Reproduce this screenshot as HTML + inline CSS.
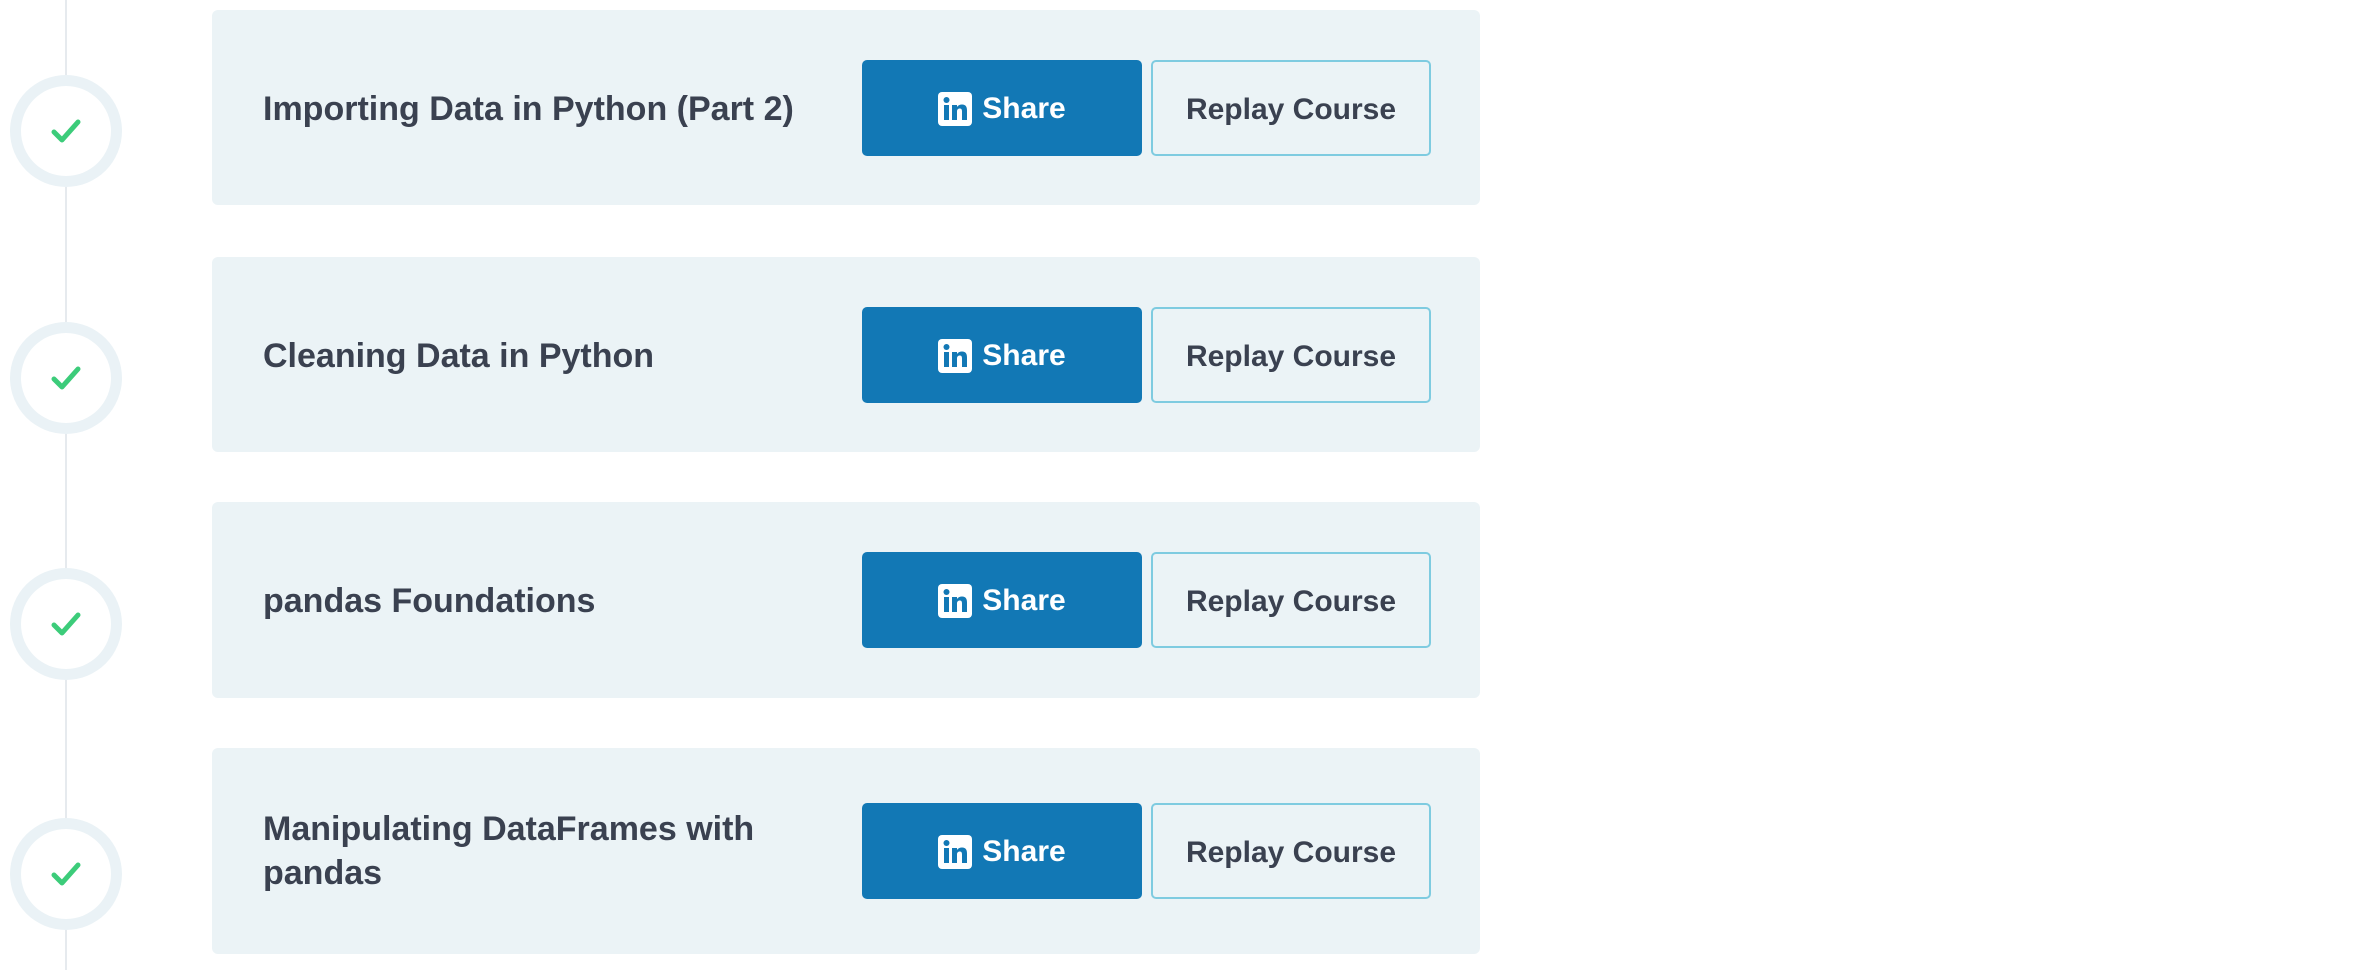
<!DOCTYPE html>
<html><head><style>
html,body{margin:0;padding:0;background:#fff;width:2368px;height:970px;overflow:hidden;font-family:"Liberation Sans",sans-serif;}
.line{position:absolute;left:65px;top:0;width:2px;height:970px;background:#e6eaee;}
.circ{position:absolute;left:10px;width:112px;height:112px;border-radius:50%;background:#eaf2f6;}
.circ .in{position:absolute;left:11px;top:11px;width:90px;height:90px;border-radius:50%;background:#fff;}
.circ svg{position:absolute;left:41px;top:44px;}
.card{position:absolute;left:212px;width:1268px;background:#ebf3f6;border-radius:6px;}
.title{position:absolute;left:51px;font-weight:bold;font-size:34px;color:#3a4150;line-height:44px;width:540px;}
.share{position:absolute;left:650px;width:280px;height:96px;background:#1278b5;border-radius:5px;color:#fff;font-weight:bold;font-size:30px;display:flex;align-items:center;justify-content:center;padding-top:2px;box-sizing:border-box;}
.replay{position:absolute;left:939px;width:276px;height:92px;border:2px solid #7ecbe0;border-radius:5px;color:#3a4150;font-weight:bold;font-size:30px;display:flex;align-items:center;justify-content:center;box-sizing:content-box;padding-top:0;}
.replay span{position:relative;top:2px;}
</style></head><body>
<div class="line"></div>
<div class="circ" style="top:75px"><div class="in"></div><svg width="30" height="26" viewBox="0 0 30 26"><path d="M3 13 L11 21 L27 3" fill="none" stroke="#3ccc7a" stroke-width="5" stroke-linecap="round" stroke-linejoin="round"/></svg></div>
<div class="circ" style="top:322px"><div class="in"></div><svg width="30" height="26" viewBox="0 0 30 26"><path d="M3 13 L11 21 L27 3" fill="none" stroke="#3ccc7a" stroke-width="5" stroke-linecap="round" stroke-linejoin="round"/></svg></div>
<div class="circ" style="top:568px"><div class="in"></div><svg width="30" height="26" viewBox="0 0 30 26"><path d="M3 13 L11 21 L27 3" fill="none" stroke="#3ccc7a" stroke-width="5" stroke-linecap="round" stroke-linejoin="round"/></svg></div>
<div class="circ" style="top:818px"><div class="in"></div><svg width="30" height="26" viewBox="0 0 30 26"><path d="M3 13 L11 21 L27 3" fill="none" stroke="#3ccc7a" stroke-width="5" stroke-linecap="round" stroke-linejoin="round"/></svg></div>

<div class="card" style="top:10px;height:195px">
<div class="title" style="top:77px">Importing Data in Python (Part 2)</div>
<div class="share" style="top:50px"><svg width="34" height="34" viewBox="0 0 34 34" style="margin-right:10px"><rect width="34" height="34" rx="4" fill="#fff"/><rect x="6" y="13" width="5" height="15" fill="#1278b5"/><circle cx="8.5" cy="8" r="3" fill="#1278b5"/><path d="M14 13h5v2c1-1.6 3-2.5 5-2.5 4 0 5 2.5 5 6V28h-5v-8.5c0-2-.6-3-2.3-3S19 17.7 19 19.5V28h-5z" fill="#1278b5"/></svg>Share</div>
<div class="replay" style="top:50px"><span>Replay Course</span></div>
</div>
<div class="card" style="top:257px;height:195px">
<div class="title" style="top:77px">Cleaning Data in Python</div>
<div class="share" style="top:50px"><svg width="34" height="34" viewBox="0 0 34 34" style="margin-right:10px"><rect width="34" height="34" rx="4" fill="#fff"/><rect x="6" y="13" width="5" height="15" fill="#1278b5"/><circle cx="8.5" cy="8" r="3" fill="#1278b5"/><path d="M14 13h5v2c1-1.6 3-2.5 5-2.5 4 0 5 2.5 5 6V28h-5v-8.5c0-2-.6-3-2.3-3S19 17.7 19 19.5V28h-5z" fill="#1278b5"/></svg>Share</div>
<div class="replay" style="top:50px"><span>Replay Course</span></div>
</div>
<div class="card" style="top:502px;height:196px">
<div class="title" style="top:77px">pandas Foundations</div>
<div class="share" style="top:50px"><svg width="34" height="34" viewBox="0 0 34 34" style="margin-right:10px"><rect width="34" height="34" rx="4" fill="#fff"/><rect x="6" y="13" width="5" height="15" fill="#1278b5"/><circle cx="8.5" cy="8" r="3" fill="#1278b5"/><path d="M14 13h5v2c1-1.6 3-2.5 5-2.5 4 0 5 2.5 5 6V28h-5v-8.5c0-2-.6-3-2.3-3S19 17.7 19 19.5V28h-5z" fill="#1278b5"/></svg>Share</div>
<div class="replay" style="top:50px"><span>Replay Course</span></div>
</div>
<div class="card" style="top:748px;height:206px">
<div class="title" style="top:59px">Manipulating DataFrames with pandas</div>
<div class="share" style="top:55px"><svg width="34" height="34" viewBox="0 0 34 34" style="margin-right:10px"><rect width="34" height="34" rx="4" fill="#fff"/><rect x="6" y="13" width="5" height="15" fill="#1278b5"/><circle cx="8.5" cy="8" r="3" fill="#1278b5"/><path d="M14 13h5v2c1-1.6 3-2.5 5-2.5 4 0 5 2.5 5 6V28h-5v-8.5c0-2-.6-3-2.3-3S19 17.7 19 19.5V28h-5z" fill="#1278b5"/></svg>Share</div>
<div class="replay" style="top:55px"><span>Replay Course</span></div>
</div>
</body></html>
